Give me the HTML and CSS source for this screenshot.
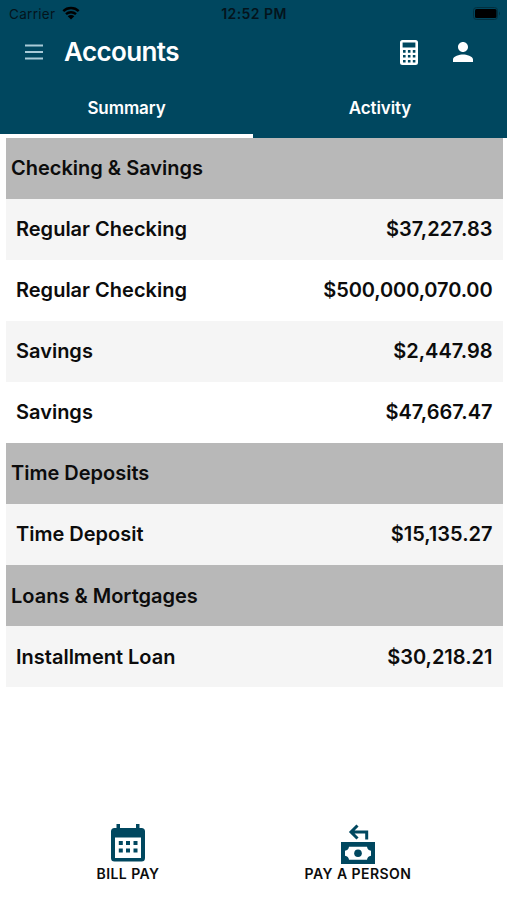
FILE: index.html
```
<!DOCTYPE html>
<html lang="en">
<head>
  <meta charset="UTF-8">
  <meta name="viewport" content="width=device-width, initial-scale=1.0">
  <title>Accounts</title>
  <link rel="stylesheet" href="styles.css">
</head>
<body>
  <header>
    <div class="status-bar">
      <div class="carrier">
        <span>Carrier</span>
        <svg class="wifi" viewBox="0 0 18 14">
          <path d="M1.3 5.2a11 11 0 0 1 15.4 0" />
          <path d="M4 8.2a7.2 7.2 0 0 1 10 0" />
          <path class="dot" d="M9 13.6L5.7 10.3a4.7 4.7 0 0 1 6.6 0z" />
        </svg>
      </div>
      <span class="time">12:52 PM</span>
      <svg class="battery" viewBox="0 0 28 13">
        <rect class="case" x="0.5" y="0.5" width="24" height="12" rx="3" />
        <rect x="2" y="2" width="21.5" height="9" rx="1.5" />
        <path class="tip" d="M26 4.5q2 2 0 4z" />
      </svg>
    </div>
    <div class="title-bar">
      <svg class="menu" viewBox="0 0 18 16">
        <path d="M0 1.5h18M0 8h18M0 14.5h18" />
      </svg>
      <h1>Accounts</h1>
      <svg class="calculator" viewBox="0 0 18 25">
        <path fill-rule="evenodd" d="M2.5 0h13A2.5 2.5 0 0 1 18 2.5v20a2.5 2.5 0 0 1-2.5 2.5h-13A2.5 2.5 0 0 1 0 22.5v-20A2.5 2.5 0 0 1 2.5 0z
          M2.6 2.6v5h12.8v-5z
          M3 10.1v2.6h2.6v-2.6zM7.9 10.1v2.6h2.6v-2.6zM12.8 10.1v2.6h2.6v-2.6z
          M3 15v2.6h2.6V15zM7.9 15v2.6h2.6V15zM12.8 15v2.6h2.6V15z
          M3 19.9v2.6h2.6v-2.6zM7.9 19.9v2.6h2.6v-2.6zM12.8 19.9v2.6h2.6v-2.6z" />
      </svg>
      <svg class="person" viewBox="4 4 16 16">
        <path d="M12 12c2.21 0 4-1.79 4-4s-1.79-4-4-4-4 1.79-4 4 1.79 4 4 4zm0 2c-2.67 0-8 1.34-8 4v2h16v-2c0-2.66-5.33-4-8-4z" />
      </svg>
    </div>
    <nav>
      <a class="tab active">Summary</a>
      <a class="tab">Activity</a>
    </nav>
  </header>
  <main>
    <h2>Checking &amp; Savings</h2>
    <div class="account shaded"><span>Regular Checking</span><span>$37,227.83</span></div>
    <div class="account"><span>Regular Checking</span><span class="long">$500,000,070.00</span></div>
    <div class="account shaded"><span>Savings</span><span>$2,447.98</span></div>
    <div class="account"><span>Savings</span><span>$47,667.47</span></div>
    <h2>Time Deposits</h2>
    <div class="account shaded"><span>Time Deposit</span><span>$15,135.27</span></div>
    <h2>Loans &amp; Mortgages</h2>
    <div class="account shaded"><span>Installment Loan</span><span>$30,218.21</span></div>
  </main>
  <footer>
    <a class="action">
      <svg viewBox="0 0 34 40">
        <path fill-rule="evenodd" d="M5.5 0H9v4h16V0h3.500v4h2A3.500 3.500 0 0 1 34 7.500V34a3.500 3.500 0 0 1-3.500 3.500h-27A3.500 3.500 0 0 1 0 34V7.500A3.500 3.500 0 0 1 3.500 4h2z
          M4 13.500V34h26V13.500z" />
        <path d="M7.800 17h4v4h-4zM15 17h4v4h-4zM22.500 17h4v4h-4zM7.800 24.500h4v4h-4zM15 24.500h4v4h-4zM22.500 24.500h4v4h-4z" />
      </svg>
      <span>BILL PAY</span>
    </a>
    <a class="action">
      <svg viewBox="0 0 34 40">
        <path class="arrow" d="M16.500 1.500L10 8l6.500 6.500M10 8h15.700v7.500" />
        <path fill-rule="evenodd" d="M0 18h34v22H0z
          M8 22.800a4.500 4.500 0 0 1-4 4v4.900a4.500 4.500 0 0 1 4 4h18a4.500 4.500 0 0 1 4-4v-4.900a4.500 4.500 0 0 1-4-4z" />
        <circle cx="17" cy="29.200" r="3.800" />
      </svg>
      <span>PAY A PERSON</span>
    </a>
  </footer>
</body>
</html>
```

FILE: styles.css
```
* {
  box-sizing: border-box;
}
body {
  display: flex;
  flex-direction: column;
  height: 900px;
  margin: 0;
  font-family: Inter, Roboto, sans-serif;
  background-color: #fff;
  color: #0c0c0c;
}
header {
  height: 137.6px;
  background-color: #00475f;
  color: #fff;
}
.status-bar {
  display: grid;
  grid-template-columns: 1fr auto 1fr;
  align-items: center;
  height: 27px;
  padding: 0 6px 0 9px;
  font-size: 13.5px;
  color: #04141c;
}
.carrier {
  display: flex;
  align-items: center;
  gap: 7px;
  letter-spacing: 0.3px;
}
.wifi {
  width: 18px;
  height: 14px;
  margin-top: -2px;
  fill: none;
  stroke: #000;
  stroke-width: 2.4;
}
.wifi .dot {
  fill: #000;
  stroke: none;
}
.time {
  margin-right: 2px;
  font-size: 14px;
  font-weight: 600;
  letter-spacing: 0.45px;
}
.battery {
  justify-self: end;
  width: 28px;
  height: 13px;
  margin-top: -1px;
}
.battery .case {
  fill: none;
  stroke: #02303f;
}
.battery .tip {
  fill: #02303f;
}
.title-bar {
  display: flex;
  align-items: center;
  height: 50px;
  padding: 0 34px 0 25px;
}
.menu {
  width: 18px;
  height: 16px;
  stroke: #a9cbd8;
  stroke-width: 1.8;
}
h1 {
  flex: 1;
  margin: -2px 0 0 21px;
  font-size: 26px;
  font-weight: 600;
  letter-spacing: -0.6px;
}
.calculator {
  width: 18px;
  height: 25px;
  margin-right: 35px;
  fill: #fff;
}
.person {
  width: 20px;
  height: 20px;
  fill: #fff;
}
nav {
  display: flex;
  height: 60.6px;
}
.tab {
  flex: 1;
  padding-top: 20px;
  border-bottom: 4px solid transparent;
  font-size: 17px;
  font-weight: 600;
  line-height: 22px;
  letter-spacing: -0.1px;
  text-align: center;
}
.tab.active {
  flex: 0 0 253px;
  border-color: #fff;
}
main {
  flex: 1;
  padding: 0 4px 0 6px;
}
h2, .account {
  display: flex;
  align-items: center;
  justify-content: space-between;
  height: 61.1px;
  margin: 0;
  padding-bottom: 0.6px;
  font-size: 20px;
  font-weight: 600;
}
h2 {
  padding-left: 5px;
  background-color: #b8b8b8;
}
.account {
  padding-left: 10px;
  padding-right: 10.5px;
}
.long {
  letter-spacing: -0.12px;
}
.shaded {
  background-color: #f5f5f5;
}
footer {
  display: flex;
  padding: 0 34px 17px 13px;
}
.action {
  display: flex;
  flex: 1;
  flex-direction: column;
  align-items: center;
  gap: 1px;
  font-size: 14px;
  font-weight: 600;
  line-height: 18px;
  letter-spacing: 0.45px;
}
.action svg {
  width: 34px;
  height: 40px;
  fill: #00475f;
}
.action .arrow {
  fill: none;
  stroke: #00475f;
  stroke-width: 3;
}
```
